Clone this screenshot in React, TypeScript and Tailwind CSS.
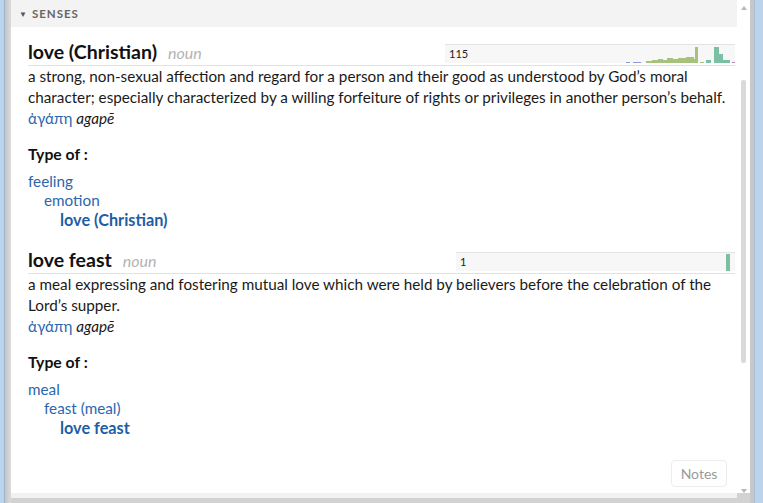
import React from "react";

type Bar = [number, number, number, string];

const BLUE = "#8b9ad8";
const GREEN = "#a6c27c";
const TEAL = "#7bbfa4";

const christianBars: Bar[] = [
  [181, 4, 1, BLUE],
  [188, 8, 1, BLUE],
  [201, 6, 2, GREEN],
  [207, 6, 3, GREEN],
  [213, 5, 4, GREEN],
  [218, 4, 3, GREEN],
  [222, 6, 5, GREEN],
  [228, 5, 4, GREEN],
  [233, 8, 5, GREEN],
  [241, 8, 6, GREEN],
  [249, 1, 4, GREEN],
  [250, 3, 16, GREEN],
  [255, 4, 1, GREEN],
  [261, 5, 3, TEAL],
  [269, 5, 16, TEAL],
  [274, 4, 9, TEAL],
  [278, 7, 3, TEAL],
  [287, 3, 1, "#b58ab8"],
];

const feastBars: Bar[] = [[270, 4, 17, TEAL]];

const Histogram: React.FC<{ count: string; width: number; bars: Bar[] }> = ({
  count,
  width,
  bars,
}) => (
  <div
    className="relative h-[19px] mb-[2px] bg-[#f7f7f7] border-t border-[#e3e3e3]"
    style={{ width }}
  >
    <span className="absolute left-[4px] top-[1px] text-[11px] leading-[16px] text-[#222]">
      {count}
    </span>
    <svg className="absolute left-0 top-0" width={width} height={18}>
      {bars.map(([x, w, h, c], i) => (
        <rect key={i} x={x} y={18 - h} width={w} height={h} fill={c} />
      ))}
    </svg>
  </div>
);

const Sense: React.FC<{
  title: string;
  def: React.ReactNode;
  chart: React.ReactNode;
  chain: string[];
}> = ({ title, def, chart, chain }) => (
  <div>
    <div className="flex items-end justify-between h-[26px] border-b border-[#e2e2e2]">
      <div className="self-center flex items-baseline gap-[11px]">
        <span className="text-[19.5px] font-bold text-[#111] leading-[24px]">
          {title}
        </span>
        <span className="text-[16px] italic text-[#b3b3b3]">noun</span>
      </div>
      {chart}
    </div>
    <div className="text-[15.25px] leading-[21px] text-[#1a1a1a] pr-[6px]">
      {def}
    </div>
    <div className="text-[15.25px] leading-[21px]">
      <span className="text-[#2b66ad]">ἀγάπη</span>{" "}
      <span className="italic text-[#1a1a1a]">agapē</span>
    </div>
    <div className="mt-[14px] text-[15.75px] leading-[21px] font-bold text-[#111]">
      Type of :
    </div>
    <div className="mt-[8px] text-[15.25px] leading-[19px]">
      <div className="text-[#2b66ad]">{chain[0]}</div>
      <div className="pl-[16px] text-[#2b66ad]">{chain[1]}</div>
      <div className="pl-[32px] text-[16.25px] font-bold text-[#1d5ea6]">
        {chain[2]}
      </div>
    </div>
  </div>
);

export default function App() {
  return (
    <div
      className="w-[763px] h-[503px] flex bg-[#d2d2d2] overflow-hidden"
      style={{ fontFamily: "Lato, 'Open Sans', sans-serif" }}
    >
      <div className="w-[5px] h-full bg-[#bcd3ec] border-r border-[#9cb3cd]" />
      <div className="w-[6px] h-full bg-gradient-to-r from-[#c4c4c4] to-[#dcdcdc]" />
      <div className="w-[739px] h-full flex flex-col">
        <div className="h-[493px] flex bg-white">
          <div className="w-[726px] flex flex-col">
            <div className="h-[27px] bg-[#f3f3f3] flex items-center pl-[8px] gap-[5px]">
              <span className="text-[8px] text-[#555]">▼</span>
              <span className="text-[11.5px] font-bold tracking-[1px] text-[#666]">
                SENSES
              </span>
            </div>
            <div className="flex-1 flex flex-col pl-[17px] pr-[2px] pt-[13px]">
              <Sense
                title="love (Christian)"
                def="a strong, non-sexual affection and regard for a person and their good as understood by God’s moral character; especially characterized by a willing forfeiture of rights or privileges in another person’s behalf."
                chart={<Histogram count="115" width={290} bars={christianBars} />}
                chain={["feeling", "emotion", "love (Christian)"]}
              />
              <div className="h-[19px]" />
              <Sense
                title="love feast"
                def="a meal expressing and fostering mutual love which were held by believers before the celebration of the Lord’s supper."
                chart={<Histogram count="1" width={279} bars={feastBars} />}
                chain={["meal", "feast (meal)", "love feast"]}
              />
              <div className="flex-1" />
              <div className="flex justify-end pr-[8px] pb-[6px]">
                <button className="w-[56px] h-[27px] rounded-[4px] border border-[#ececec] bg-white text-[14px] text-[#9a9a9a]">
                  Notes
                </button>
              </div>
            </div>
          </div>
          <div className="w-[13px] relative">
            <svg className="absolute left-[4px] top-[6px]" width="6" height="4">
              <polygon points="0,4 3,0 6,4" fill="#b8b8b8" />
            </svg>
            <div className="absolute left-[4px] top-[80px] w-[5px] h-[283px] rounded-[2px] bg-[#dadada]" />
            <svg className="absolute left-[4px] bottom-[0px]" width="6" height="4">
              <polygon points="0,0 6,0 3,4" fill="#b8b8b8" />
            </svg>
          </div>
        </div>
        <div className="h-[5px] w-[726px] bg-[#f1f1f1]" />
      </div>
      <div className="w-[4px] h-full bg-[#c8c8c8]" />
      <div className="flex-1 h-full bg-[#bcd3ec] border-l border-[#a8bfd9]" />
    </div>
  );
}
